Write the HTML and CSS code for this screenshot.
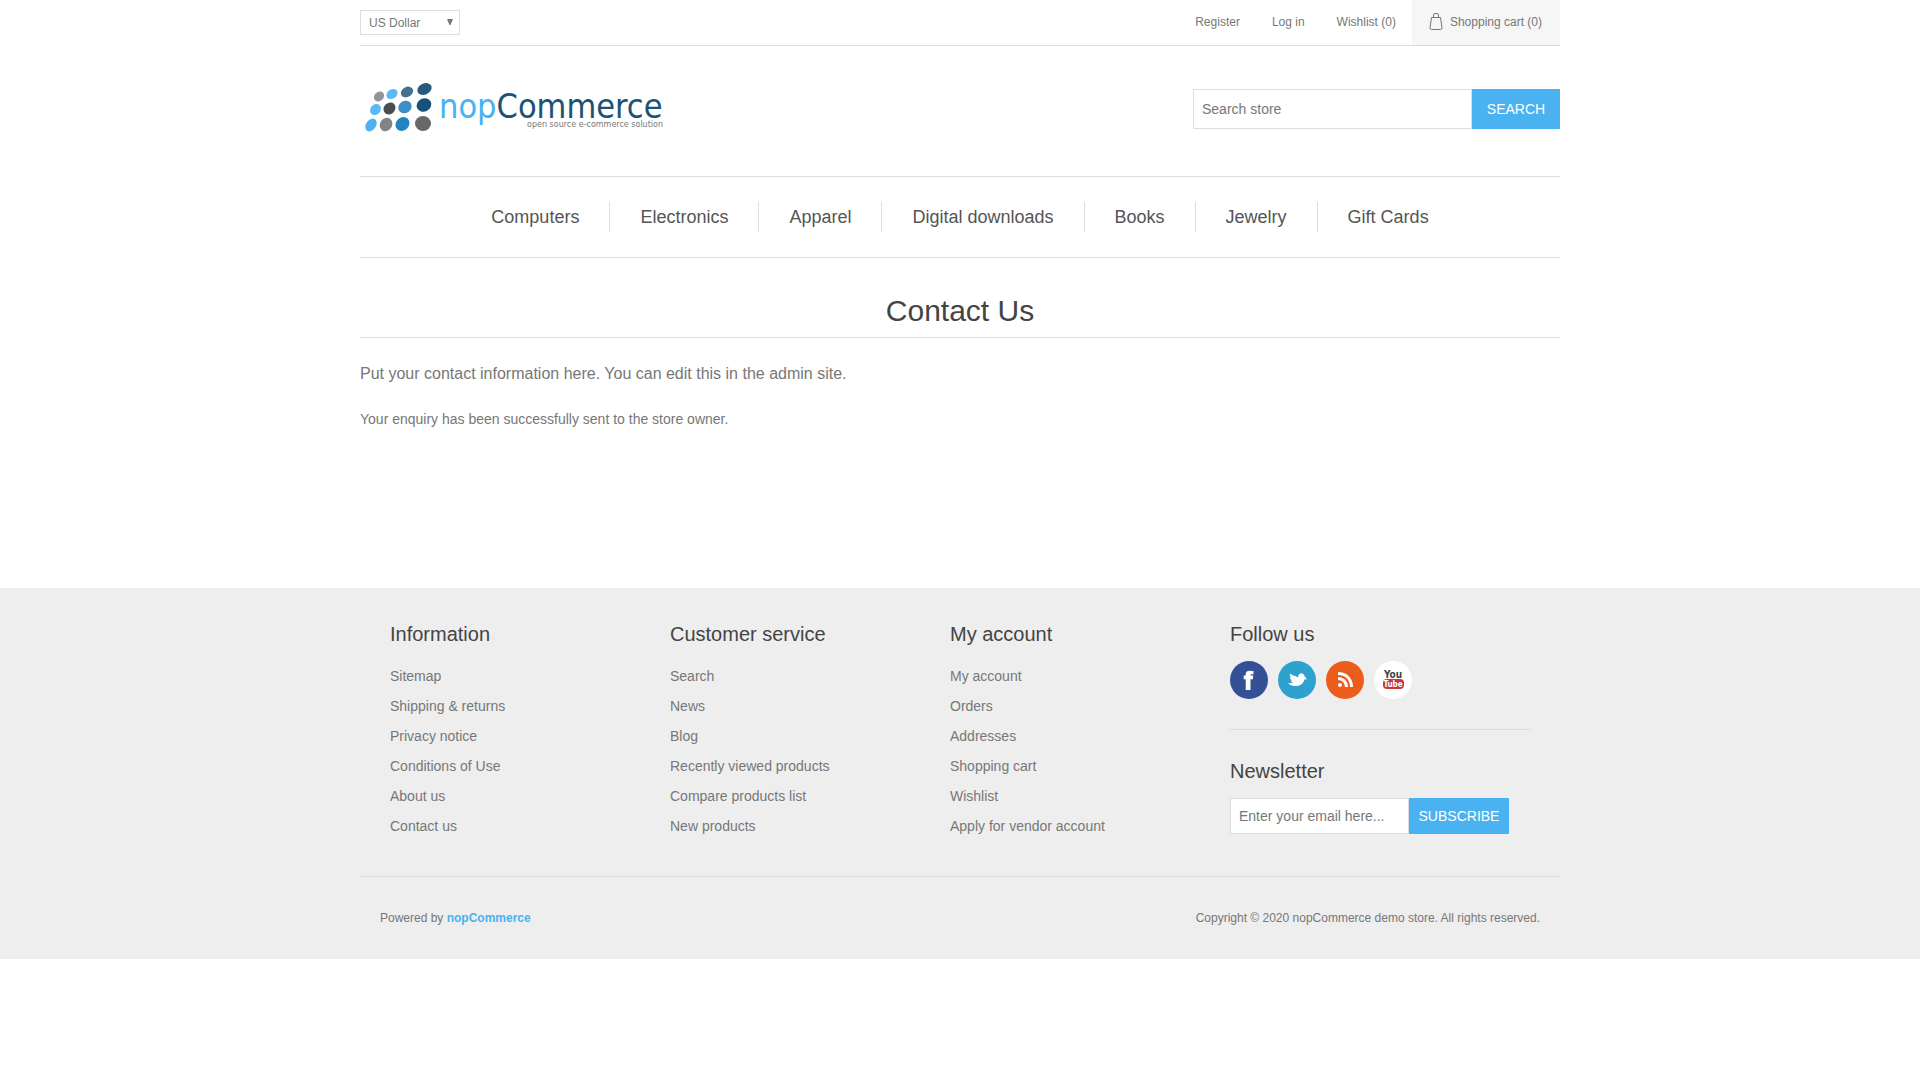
FILE: index.html
```
<!DOCTYPE html>
<html lang="en">
<head>
<meta charset="utf-8">
<title>nopCommerce demo store. Contact Us</title>
<meta name="viewport" content="width=device-width, initial-scale=1">
<link rel="stylesheet" href="styles.css">
</head>
<body>
<header class="header container">
  <div class="header-upper">
    <div class="currency">
      <select class="currency-select" aria-label="Currency">
        <option>US Dollar</option>
        <option>Euro</option>
      </select>
      <svg class="currency-arrow" width="6" height="6" viewBox="0 0 6 6" aria-hidden="true"><path d="M0 0h6L3.500 6h-1z" fill="#777"/></svg>
    </div>
    <nav class="header-links" aria-label="Account">
      <a href="#">Register</a>
      <a href="#">Log in</a>
      <a href="#">Wishlist (0)</a>
      <a href="#" class="cart-link">
        <svg width="14" height="17" viewBox="0 0 14 17" fill="none" stroke="#777" aria-hidden="true"><path d="M2.500 4.500h9l1.500 10.500q0 1.500-1.500 1.500h-9q-1.500 0-1.500-1.500zM4.500 4V2q0-1.500 1.500-1.500h2q1.500 0 1.500 1.500v2"/></svg>
        Shopping cart (0)
      </a>
    </nav>
  </div>
  <div class="header-lower">
    <a href="#" class="logo" aria-label="nopCommerce">
      <svg width="310" height="60" viewBox="0 2 310 60">
        <g>
          <ellipse cx="19" cy="19.500" rx="5.500" ry="4.500" transform="rotate(-40 19 19.500)" fill="#929497"/>
          <ellipse cx="32" cy="17" rx="6" ry="4.500" transform="rotate(-35 32 17)" fill="#5ab9f7"/>
          <ellipse cx="47" cy="15" rx="6.500" ry="5" transform="rotate(-30 47 15)" fill="#46708f"/>
          <ellipse cx="64.500" cy="12" rx="7.500" ry="5.500" transform="rotate(-25 64.500 12)" fill="#275b7d"/>
          <ellipse cx="15.500" cy="32.500" rx="6" ry="5" transform="rotate(-50 15.500 32.500)" fill="#5ab9f7"/>
          <ellipse cx="29.500" cy="31.500" rx="6.500" ry="5.500" transform="rotate(-45 29.500 31.500)" fill="#4b4c4e"/>
          <ellipse cx="45" cy="30" rx="7" ry="6" transform="rotate(-35 45 30)" fill="#3a8fc9"/>
          <ellipse cx="64" cy="28" rx="7.500" ry="6.500" transform="rotate(-25 64 28)" fill="#195176"/>
          <ellipse cx="11" cy="48" rx="7" ry="5" transform="rotate(-55 11 48)" fill="#4fb1f1"/>
          <ellipse cx="26" cy="47.500" rx="7" ry="6" transform="rotate(-55 26 47.500)" fill="#828385"/>
          <ellipse cx="42.500" cy="47" rx="7.500" ry="6.500" transform="rotate(-45 42.500 47)" fill="#2484c0"/>
          <ellipse cx="63" cy="46.500" rx="8" ry="7.500" fill="#676869"/>
        </g>
        <text class="logo-name" x="79" y="41"><tspan fill="#4ab2f1">nop</tspan><tspan fill="#1c5375">Commerce</tspan></text>
        <text class="logo-tagline" x="303" y="50" text-anchor="end">open source e-commerce solution</text>
      </svg>
    </a>
    <form class="search-box">
      <input type="search" class="search-input" placeholder="Search store" aria-label="Search store">
      <button type="button" class="button search-button">SEARCH</button>
    </form>
  </div>
</header>

<nav class="menu container" aria-label="Categories">
  <a href="#">Computers</a>
  <a href="#">Electronics</a>
  <a href="#">Apparel</a>
  <a href="#">Digital downloads</a>
  <a href="#">Books</a>
  <a href="#">Jewelry</a>
  <a href="#">Gift Cards</a>
</nav>

<main class="content container">
  <h1 class="page-title">Contact Us</h1>
  <p class="topic">Put your contact information here. You can edit this in the admin site.</p>
  <p class="result">Your enquiry has been successfully sent to the store owner.</p>
</main>

<footer class="footer">
  <div class="container">
    <div class="footer-upper">
      <section>
        <h2>Information</h2>
        <ul class="footer-list">
          <li><a href="#">Sitemap</a></li>
          <li><a href="#">Shipping &amp; returns</a></li>
          <li><a href="#">Privacy notice</a></li>
          <li><a href="#">Conditions of Use</a></li>
          <li><a href="#">About us</a></li>
          <li><a href="#">Contact us</a></li>
        </ul>
      </section>
      <section>
        <h2>Customer service</h2>
        <ul class="footer-list">
          <li><a href="#">Search</a></li>
          <li><a href="#">News</a></li>
          <li><a href="#">Blog</a></li>
          <li><a href="#">Recently viewed products</a></li>
          <li><a href="#">Compare products list</a></li>
          <li><a href="#">New products</a></li>
        </ul>
      </section>
      <section>
        <h2>My account</h2>
        <ul class="footer-list">
          <li><a href="#">My account</a></li>
          <li><a href="#">Orders</a></li>
          <li><a href="#">Addresses</a></li>
          <li><a href="#">Shopping cart</a></li>
          <li><a href="#">Wishlist</a></li>
          <li><a href="#">Apply for vendor account</a></li>
        </ul>
      </section>
      <section>
        <h2>Follow us</h2>
        <div class="social">
          <a href="#" aria-label="Facebook">
            <svg width="38" height="38" viewBox="0 0 38 38"><circle cx="19" cy="19" r="19" fill="#335194"/><path d="M15.700 29V18.300h-2v-3.800h2v-1.300c0-2.500 1.500-3.500 4-3.500 1.500 0 3 .2 4 .5l-.5 3.300c-1.800-.4-2.700-.3-2.700.8v.2h2.700l-.3 3.800h-2.400V29z" fill="#fff"/></svg>
          </a>
          <a href="#" aria-label="Twitter">
            <svg width="38" height="38" viewBox="0 0 38 38"><circle cx="19" cy="19" r="19" fill="#2da2ce"/><path d="M9.700 22q3 .8 5.500-.5c-1.200-.2-2-.8-2.400-1.800l1.300-.3c-1.400-.7-2.200-1.800-2.200-3.100l1.300.2C12 15.400 11.600 14 12 12.500c2 2 5 2 8 4 0-2.700 2-4.500 4-4.100 1.500.3 2.300 1.400 2.600 2.900l2.400 3.200-2.500-.2c-.8 4-4.500 6.800-8.500 6.800-3.500 0-6.500-1-8.300-3.100z" fill="#fff"/></svg>
          </a>
          <a href="#" aria-label="RSS">
            <svg width="38" height="38" viewBox="0 0 38 38"><circle cx="19" cy="19" r="19" fill="#ec5d1c"/><circle cx="14" cy="24" r="2" fill="#fff"/><path d="M12 17.500c5 0 8.500 3.500 8.500 8.500M12 12.500c8 0 13.500 5.500 13.500 13.500" fill="none" stroke="#fff" stroke-width="3"/></svg>
          </a>
          <a href="#" aria-label="YouTube">
            <svg width="38" height="38" viewBox="0 0 38 38"><circle cx="19" cy="19" r="19" fill="#fff"/><rect x="9" y="18" width="21" height="10" rx="4" fill="#c7363a"/><text class="youtube-text" x="19" y="17" fill="#444">You</text><text class="youtube-text youtube-small" x="19" y="26" fill="#fff">Tube</text></svg>
          </a>
        </div>
        <form class="newsletter">
          <h2><label for="newsletter-email">Newsletter</label></h2>
          <div class="newsletter-row">
            <input type="email" id="newsletter-email" class="newsletter-input" placeholder="Enter your email here...">
            <button type="button" class="button newsletter-button">SUBSCRIBE</button>
          </div>
        </form>
      </section>
    </div>
    <div class="footer-lower">
      <span>Powered by <a href="#" class="powered-link">nopCommerce</a></span>
      <span>Copyright © 2020 nopCommerce demo store. All rights reserved.</span>
    </div>
  </div>
</footer>
</body>
</html>
```
FILE: styles.css
```
* {
  box-sizing: border-box;
}

body {
  margin: 0;
  background: #fff;
  color: #777;
  font: 14px/20px "Liberation Sans", Arial, Helvetica, sans-serif;
}

a {
  color: inherit;
  text-decoration: none;
}

h1,
h2,
p,
ul {
  margin: 0;
  padding: 0;
  font-weight: normal;
}

svg {
  display: block;
}

input,
select,
button {
  margin: 0;
  border: 1px solid #ddd;
  border-radius: 0;
  background: #fff;
  color: #777;
  font: inherit;
  appearance: none;
}

input::placeholder {
  color: #777;
  opacity: 1;
}

.container {
  width: 100%;
  max-width: 1200px;
  margin: 0 auto;
}

.button {
  border: 0;
  background: #4ab2f1;
  color: #fff;
  text-align: center;
  cursor: pointer;
}

/* Header */
.header-upper {
  display: flex;
  align-items: center;
  justify-content: space-between;
  border-bottom: 1px solid #ddd;
  font-size: 12px;
}

.currency {
  position: relative;
}

.currency-select {
  display: block;
  width: 100px;
  height: 25px;
  padding: 0 8px;
}

.currency-arrow {
  position: absolute;
  top: 9px;
  right: 7px;
  pointer-events: none;
}

.header-links {
  display: flex;
  line-height: 45px;
}

.header-links a {
  padding: 0 16px;
}

.header-links .cart-link {
  display: flex;
  align-items: center;
  gap: 7px;
  padding: 0 18px 0 17px;
  background: #f6f6f6;
}

.cart-link svg {
  margin-bottom: 3px;
}

.header-lower {
  display: flex;
  align-items: center;
  justify-content: space-between;
  padding: 33px 0 37px;
}

.search-box {
  display: flex;
}

.search-input {
  width: 279px;
  height: 40px;
  padding: 0 8px;
}

.search-button {
  width: 88px;
}

.logo-name {
  font: 34px "DejaVu Sans Condensed", "DejaVu Sans", sans-serif;
  font-stretch: condensed;
}

.logo-tagline {
  font: 8px "DejaVu Sans", sans-serif;
  fill: #777;
}

/* Category menu */
.menu {
  display: flex;
  flex-wrap: wrap;
  justify-content: center;
  padding: 25px 0;
  border: solid #ddd;
  border-width: 1px 0;
  color: #555;
  font-size: 18px;
  line-height: 30px;
}

.menu a {
  padding: 0 30px;
}

.menu a + a {
  border-left: 1px solid #ddd;
}

/* Content */
.content {
  min-height: 330px;
  padding-top: 30px;
}

.page-title {
  padding-bottom: 4px;
  border-bottom: 1px solid #ddd;
  color: #444;
  font-size: 30px;
  line-height: 45px;
  text-align: center;
}

.topic {
  padding: 20px 0 19px;
  font-size: 16px;
  line-height: 32px;
}

/* Footer */
.footer {
  background: #eee;
}

.footer h2 {
  color: #444;
  font-size: 20px;
  line-height: 32px;
}

.footer-upper {
  display: grid;
  grid-template-columns: repeat(3, 280fr) 300fr;
  padding: 30px 30px 35px;
}

.footer-list {
  margin-top: 11px;
  line-height: 30px;
  list-style: none;
}

.social {
  display: flex;
  gap: 10px;
  padding: 11px 0 30px;
  border-bottom: 1px solid #ddd;
}

.youtube-text {
  font: bold 10px "DejaVu Sans Condensed", sans-serif;
  font-stretch: condensed;
  text-anchor: middle;
}

.youtube-small {
  font-size: 8px;
}

.newsletter {
  padding-top: 25px;
}

.newsletter-row {
  display: flex;
  margin-top: 11px;
}

.newsletter-input {
  width: 179px;
  height: 36px;
  padding: 0 8px;
}

.newsletter-button {
  width: 100px;
}

.footer-lower {
  display: flex;
  justify-content: space-between;
  padding: 31px 20px;
  border-top: 1px solid #ddd;
  font-size: 12px;
}

.powered-link {
  color: #4ab2f1;
  font-weight: bold;
}
```
